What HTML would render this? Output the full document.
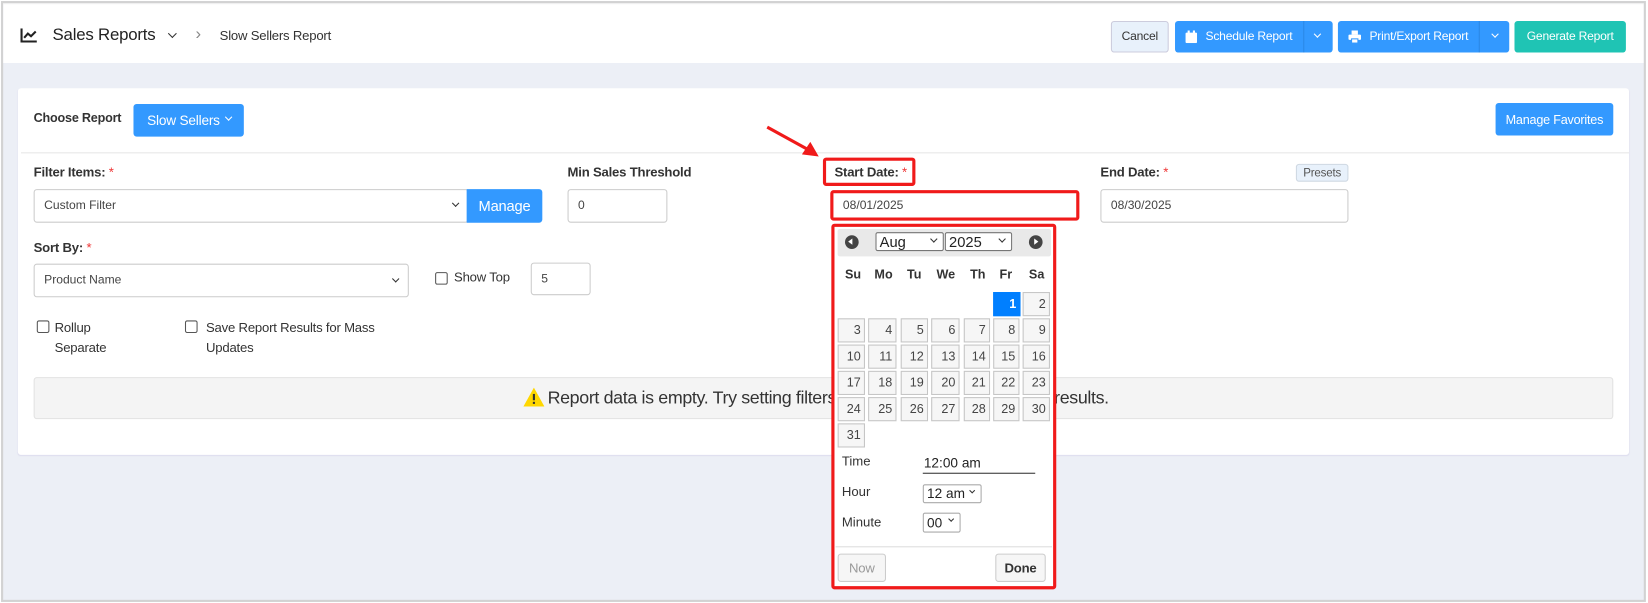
<!DOCTYPE html>
<html><head><meta charset="utf-8"><style>
*{box-sizing:border-box;margin:0;padding:0}
html,body{width:1648px;height:603px;overflow:hidden;background:#fff;font-family:"Liberation Sans",Arial,sans-serif;color:#333}
#w{position:absolute;left:0;top:0;width:1568px;height:574px;transform:scale(1.051,1.0505);transform-origin:0 0}
.a{position:absolute}
.frame{left:1px;top:1px;width:1565px;height:572px;border:2px solid #d2d2d2;background:#eceff6;overflow:hidden}
.hdr{left:0;top:0;right:0;height:57px;background:#fff;border-top:1px solid #eee}
.btn{position:absolute;border-radius:3px;color:#fff;font-size:11.5px;display:flex;align-items:center;justify-content:center;letter-spacing:-0.2px}
.blue{background:#3399ff}
.inp{position:absolute;border:1px solid #ccc;border-radius:3px;background:#fff;font-size:11.5px;padding-left:9px;display:flex;align-items:center;color:#444}
.lbl{position:absolute;font-size:12.5px;font-weight:bold;color:#333;letter-spacing:-0.2px}
.req{color:#e33;font-weight:normal}
.chev{position:absolute;width:6px;height:6px;border-right:1.6px solid #333;border-bottom:1.6px solid #333;transform:rotate(45deg)}
.cb{position:absolute;width:12px;height:12px;border:1px solid #555;border-radius:2px;background:#fff}
.cell{position:absolute;height:23px;background:#f6f6f6;border:1px solid #c5c5c5;font-size:12px;text-align:right;padding-right:3px;line-height:21px;color:#454545}
.dn{position:absolute;top:254px;font-size:12px;font-weight:bold;color:#333}
.sel{position:absolute;border:1px solid #767676;border-radius:2px;background:#fff;font-size:13px;color:#222;padding-left:3px}
.t{letter-spacing:-0.2px}
</style></head><body><div id="w">
<div class="a frame">
 <div class="a hdr"></div>
</div>
<svg class="a" style="left:19px;top:27px" width="17" height="14" viewBox="0 0 17 14"><path d="M1.5 0v12.5H16" fill="none" stroke="#222" stroke-width="2"/><path d="M4 9l3.5-4 3 2.5L15 3" fill="none" stroke="#222" stroke-width="2"/></svg>
<div class="a t" style="left:50px;top:25px;font-size:16px;color:#222">Sales Reports</div>
<div class="chev" style="left:161px;top:29px"></div>
<div class="a" style="left:186px;top:24px;font-size:16px;color:#888">&#8250;</div>
<div class="a t" style="left:209px;top:27px;font-size:12.5px;color:#333">Slow Sellers Report</div>
<div class="btn" style="left:1057px;top:20px;width:55px;height:30px;background:#e8f1fb;border:1px solid #ccd;color:#333">Cancel</div>
<div class="btn blue" style="left:1118px;top:20px;width:150px;height:30px;justify-content:flex-start;padding-left:10px"><svg width="11" height="12" viewBox="0 0 11 12"><rect x="0" y="2" width="11" height="10" rx="1" fill="#fff"/><rect x="2" y="0" width="2" height="3" fill="#fff"/><rect x="7" y="0" width="2" height="3" fill="#fff"/></svg><span style="margin-left:8px">Schedule Report</span><span style="position:absolute;left:122px;top:0;width:1px;height:30px;background:#2b88e6"></span></div>
<div class="chev" style="left:1251px;top:30px;border-color:#fff;width:5px;height:5px"></div>
<div class="btn blue" style="left:1273px;top:20px;width:163px;height:30px;justify-content:flex-start;padding-left:10px"><svg width="12" height="12" viewBox="0 0 12 12"><rect x="3" y="0" width="6" height="4" fill="#fff"/><rect x="0" y="4" width="12" height="5" rx="1" fill="#fff"/><rect x="3" y="8" width="6" height="4" fill="#fff" stroke="#3399ff" stroke-width="1"/></svg><span style="margin-left:8px">Print/Export Report</span><span style="position:absolute;left:134px;top:0;width:1px;height:30px;background:#2b88e6"></span></div>
<div class="chev" style="left:1420px;top:30px;border-color:#fff;width:5px;height:5px"></div>
<div class="btn" style="left:1441px;top:20px;width:106px;height:30px;background:#1fc4b4">Generate Report</div>
<div class="a" style="left:17px;top:84px;width:1533px;height:349px;background:#fff;border-radius:3px;box-shadow:0 1px 1px #dde"></div>
<div class="a" style="left:20px;top:145px;width:1530px;height:1px;background:#e6e6e6"></div>
<div class="a t" style="left:32px;top:105px;font-size:12px;font-weight:bold;color:#333">Choose Report</div>
<div class="btn blue" style="left:127px;top:99px;width:105px;height:31px;font-size:13px;justify-content:flex-start;padding-left:13px">Slow Sellers</div>
<div class="chev" style="left:215px;top:109px;width:5px;height:5px;border-color:#fff;border-width:1.2px"></div>
<div class="btn blue" style="left:1423px;top:98px;width:112px;height:31px;font-size:12px">Manage Favorites</div>
<div class="lbl" style="left:32px;top:157px">Filter Items: <span class="req">*</span></div>
<div class="inp" style="left:32px;top:180px;width:414px;height:32px">Custom Filter</div>
<div class="chev" style="left:431px;top:191px;width:5px;height:5px"></div>
<div class="btn blue" style="left:444px;top:180px;width:72px;height:32px;font-size:14px;border-radius:0 3px 3px 0">Manage</div>
<div class="lbl" style="left:540px;top:157px">Min Sales Threshold</div>
<div class="inp" style="left:540px;top:180px;width:95px;height:32px">0</div>
<div class="lbl" style="left:794px;top:157px">Start Date: <span class="req">*</span></div>
<div class="a" style="left:783px;top:150px;width:88px;height:27px;border:3px solid #f01a1a;border-radius:3px"></div>
<div class="inp" style="left:790px;top:181px;width:237px;height:29px;border:3px solid #f01a1a;padding-left:9px">08/01/2025</div>
<div class="lbl" style="left:1047px;top:157px">End Date: <span class="req">*</span></div>
<div class="btn" style="left:1233px;top:156px;width:50px;height:17px;background:#e8f1fb;border:1px solid #cfd8e2;color:#555;font-size:11px">Presets</div>
<div class="inp" style="left:1047px;top:180px;width:236px;height:32px">08/30/2025</div>
<div class="lbl" style="left:32px;top:229px">Sort By: <span class="req">*</span></div>
<div class="inp" style="left:32px;top:251px;width:357px;height:32px">Product Name</div>
<div class="chev" style="left:374px;top:263px;width:5px;height:5px"></div>
<div class="cb" style="left:414px;top:259px"></div>
<div class="a t" style="left:432px;top:257px;font-size:12.5px">Show Top</div>
<div class="inp" style="left:505px;top:250px;width:57px;height:31px">5</div>
<div class="cb" style="left:35px;top:305px"></div>
<div class="a t" style="left:52px;top:303px;font-size:12.5px;line-height:19px">Rollup<br>Separate</div>
<div class="cb" style="left:176px;top:305px"></div>
<div class="a t" style="left:196px;top:303px;font-size:12.5px;line-height:19px">Save Report Results for Mass<br>Updates</div>
<div class="a" style="left:32px;top:359px;width:1503px;height:40px;background:#f4f4f4;border:1px solid #e2e2e2;border-radius:3px"></div>
<svg class="a" style="left:498px;top:369px" width="20" height="18" viewBox="0 0 20 18"><path d="M10 0L20 18H0z" fill="#ffd700"/><rect x="9" y="6" width="2" height="6" fill="#333"/><rect x="9" y="13.5" width="2" height="2" fill="#333"/></svg>
<div class="a" style="left:521px;top:369px;font-size:17px;color:#333;white-space:nowrap;letter-spacing:-0.35px">Report data is empty. Try setting filters and parameters to see your results.</div>
<svg class="a" style="left:725px;top:115px" width="60" height="40" viewBox="0 0 60 40"><path d="M5 6L45 28" stroke="#f01a1a" stroke-width="3"/><path d="M54 34L38 32L46 20z" fill="#f01a1a"/></svg>
<div class="a" style="left:791px;top:213px;width:214px;height:348px;background:#fff;border:3px solid #f01a1a;border-radius:3px"></div>
<div class="a" style="left:797px;top:218px;width:203px;height:26px;background:#e9e9e9;border-radius:2px"></div>
<div class="a" style="left:804px;top:224px;width:13px;height:13px;border-radius:50%;background:#444"></div>
<div class="a" style="left:807px;top:227px;width:0;height:0;border:3.5px solid transparent;border-right:4px solid #fff;border-left:0"></div>
<div class="a" style="left:979px;top:224px;width:13px;height:13px;border-radius:50%;background:#444"></div>
<div class="a" style="left:984px;top:227px;width:0;height:0;border:3.5px solid transparent;border-left:4px solid #fff;border-right:0"></div>
<div class="sel" style="left:833px;top:221px;width:65px;height:18px;line-height:16px;font-size:14px">Aug</div>
<div class="chev" style="left:886px;top:225px;width:5px;height:5px"></div>
<div class="sel" style="left:899px;top:221px;width:64px;height:18px;line-height:16px;font-size:14px">2025</div>
<div class="chev" style="left:951px;top:225px;width:5px;height:5px"></div>
<div class="dn" style="left:804px">Su</div><div class="dn" style="left:832px">Mo</div><div class="dn" style="left:863px">Tu</div><div class="dn" style="left:891px">We</div><div class="dn" style="left:923px">Th</div><div class="dn" style="left:951px">Fr</div><div class="dn" style="left:979px">Sa</div>
<div class="cell" style="left:945px;top:278px;width:26px;background:#007fff;border-color:#007fff;color:#fff;font-weight:bold">1</div>
<div class="cell" style="left:973px;top:278px;width:26px">2</div>
<div id="cells"></div>
<div class="a" style="left:801px;top:432px;font-size:12.5px">Time</div>
<div class="a" style="left:879px;top:433px;font-size:13px;color:#222">12:00 am</div>
<div class="a" style="left:878px;top:450px;width:107px;height:1px;background:#333"></div>
<div class="a" style="left:801px;top:461px;font-size:12.5px">Hour</div>
<div class="sel" style="left:878px;top:461px;width:56px;height:18px;line-height:16px;font-size:13px;border-color:#aaa">12 am</div>
<div class="chev" style="left:923px;top:465px;width:4px;height:4px"></div>
<div class="a" style="left:801px;top:490px;font-size:12.5px">Minute</div>
<div class="sel" style="left:878px;top:488px;width:36px;height:19px;line-height:17px;font-size:13px;border-color:#aaa">00</div>
<div class="chev" style="left:903px;top:492px;width:4px;height:4px"></div>
<div class="a" style="left:795px;top:520px;width:206px;height:1px;background:#ddd"></div>
<div class="btn" style="left:797px;top:527px;width:46px;height:27px;background:#f6f6f6;border:1px solid #ccc;color:#999;font-size:12.5px">Now</div>
<div class="btn" style="left:947px;top:527px;width:48px;height:27px;background:#f6f6f6;border:1px solid #ccc;color:#333;font-size:12.5px;font-weight:bold">Done</div>
<script>
var xs=[797,826,857,886,917,945,973],ws=[26,27,26,27,25,25,26],ys=[303,328,353,378,403],h='';
var d=3;for(var r=0;r<5;r++){for(var c=0;c<7;c++){if(d>31)break;h+='<div class="cell" style="left:'+xs[c]+'px;top:'+ys[r]+'px;width:'+ws[c]+'px">'+d+'</div>';d++;}}
document.getElementById('cells').innerHTML=h;
</script>
</div></body></html>
